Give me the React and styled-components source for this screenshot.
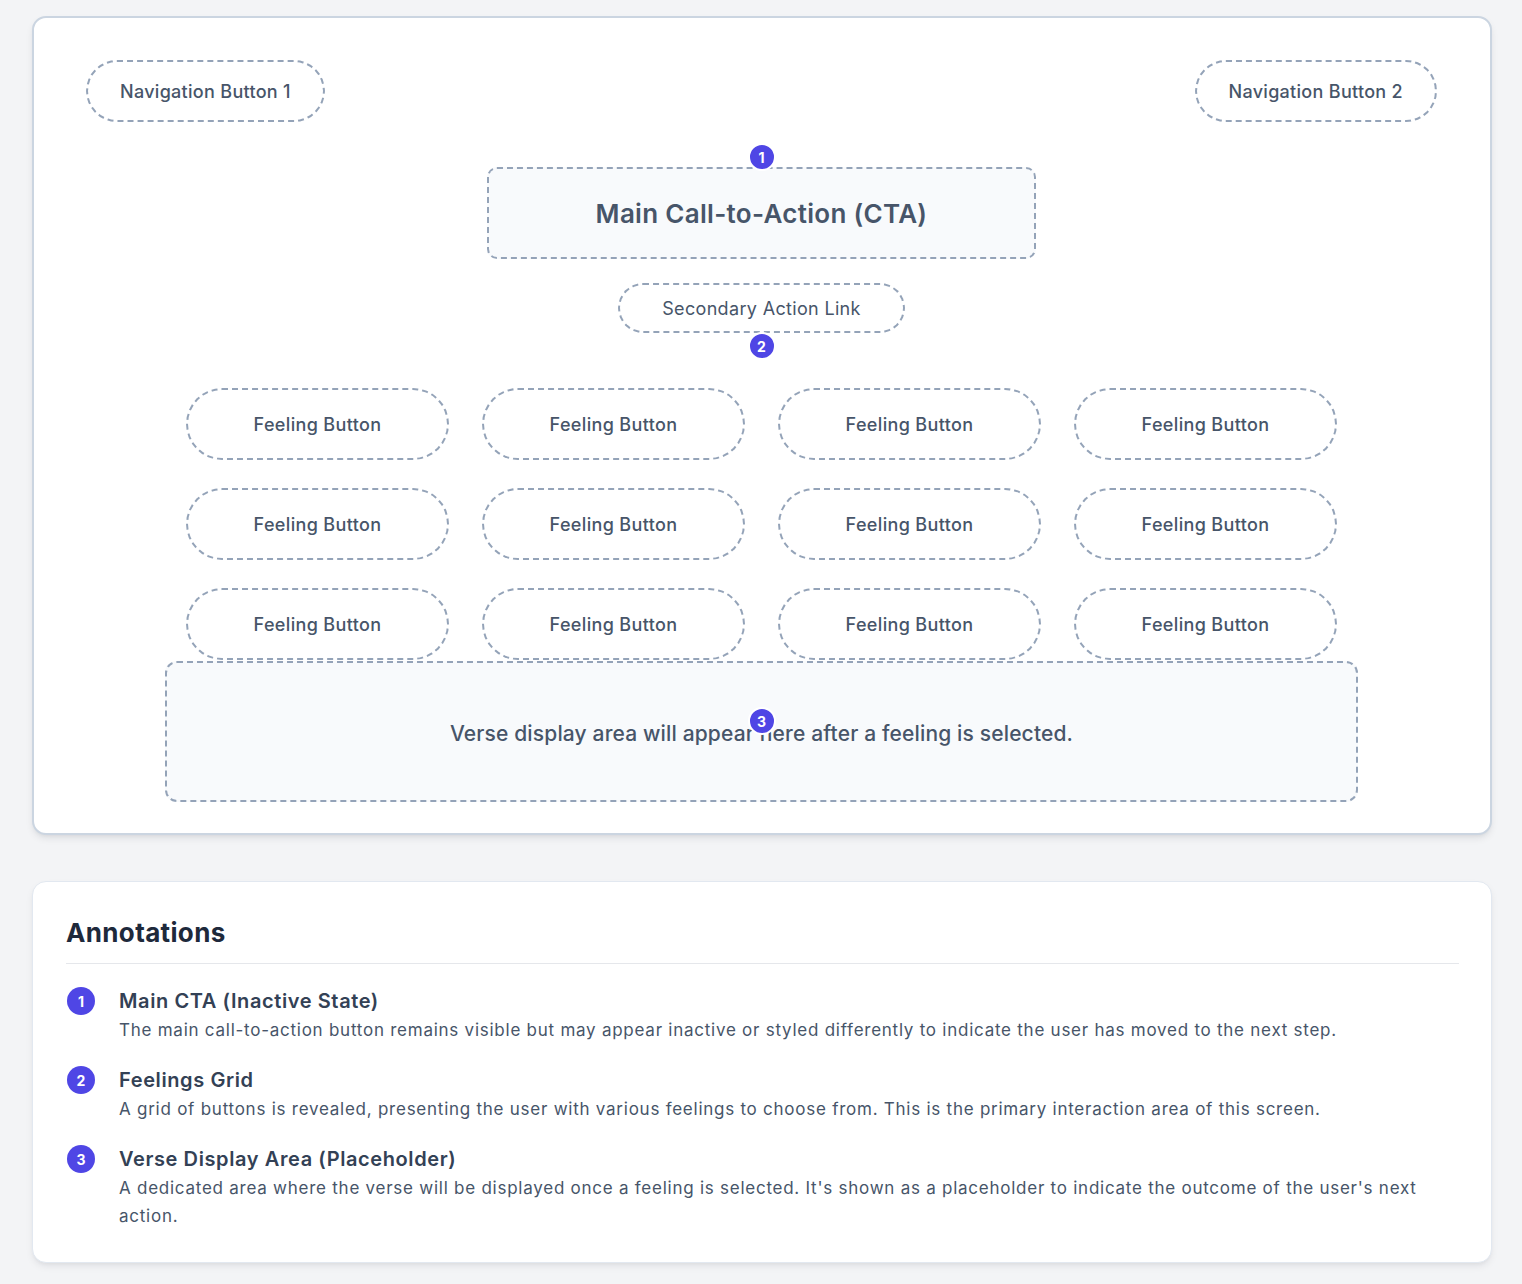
import React from 'react';
import styled, { createGlobalStyle } from 'styled-components';

const GlobalStyle = createGlobalStyle`
  * { box-sizing: border-box; }
  body {
    margin: 0;
    background: #f3f4f6;
    font-family: Inter, "Noto Sans", "Liberation Sans", sans-serif;
    color: #475569;
  }
`;

const Page = styled.div`
  padding: 16px 30px 20px 32px;
  display: flex;
  flex-direction: column;
  gap: 46px;
`;

const MockCard = styled.section`
  background: #ffffff;
  border: 2px solid #cbd5e1;
  border-radius: 14px;
  box-shadow: 0 4px 8px -2px rgba(15, 23, 42, 0.12), 0 2px 4px -2px rgba(15, 23, 42, 0.06);
  padding: 42px 53px 31px 52px;
  display: flex;
  flex-direction: column;
  align-items: center;
`;

const NavRow = styled.div`
  width: 100%;
  display: flex;
  justify-content: space-between;
`;

const Dashed = styled.div`
  position: relative;
  border: 2px dashed #94a3b8;
  display: flex;
  align-items: center;
  justify-content: center;
  color: #475569;
`;

const NavButton = styled(Dashed)`
  height: 62px;
  padding: 0 32px;
  border-radius: 9999px;
  font-size: 18px;
  font-weight: 500;
  letter-spacing: 0.3px;
`;

const Cta = styled(Dashed)`
  margin-top: 45px;
  width: 549px;
  height: 92px;
  border-radius: 10px;
  background: #f8fafc;
  font-size: 26px;
  font-weight: 600;
  letter-spacing: 0.3px;
`;

const Secondary = styled(Dashed)`
  margin-top: 24px;
  width: 287px;
  height: 50px;
  border-radius: 9999px;
  font-size: 18px;
  font-weight: 400;
  letter-spacing: 0.33px;
`;

const Badge = styled.span`
  position: absolute;
  left: 50%;
  top: ${({ $top }) => $top};
  transform: translateX(-50%);
  width: 28px;
  height: 28px;
  border-radius: 50%;
  border: 2px solid #ffffff;
  background: #4f46e5;
  color: #ffffff;
  font-size: 14px;
  font-weight: 700;
  letter-spacing: 0;
  display: flex;
  align-items: center;
  justify-content: center;
  z-index: 2;
`;

const FeelingGrid = styled.div`
  margin-top: 55px;
  display: grid;
  grid-template-columns: repeat(4, 263px);
  column-gap: 33px;
  row-gap: 28px;
`;

const FeelingButton = styled(Dashed)`
  height: 72px;
  border-radius: 9999px;
  font-size: 18px;
  font-weight: 500;
  letter-spacing: 0.35px;
`;

const Verse = styled(Dashed)`
  margin-top: 1px;
  width: 1193px;
  height: 141px;
  padding-top: 3px;
  border-radius: 12px;
  background: #f8fafc;
  font-size: 21px;
  font-weight: 500;
  letter-spacing: 0.15px;
`;

const NotesCard = styled.section`
  background: #ffffff;
  border: 1px solid #e2e8f0;
  border-radius: 14px;
  box-shadow: 0 4px 8px -2px rgba(15, 23, 42, 0.1), 0 2px 4px -2px rgba(15, 23, 42, 0.05);
  padding: 33px 32px 32px 33px;
`;

const NotesTitle = styled.h2`
  margin: 0;
  padding-bottom: 12px;
  border-bottom: 1px solid #e5e7eb;
  font-size: 26px;
  line-height: 36px;
  font-weight: 700;
  letter-spacing: 0.35px;
  color: #1e293b;
`;

const NoteList = styled.ol`
  list-style: none;
  margin: 23px 0 0;
  padding: 0;
  display: flex;
  flex-direction: column;
  gap: 22px;
`;

const NoteItem = styled.li`
  display: grid;
  grid-template-columns: 28px 1fr;
  column-gap: 24px;
  padding-left: 1px;
`;

const NoteBadge = styled.span`
  width: 28px;
  height: 28px;
  border-radius: 50%;
  background: #4f46e5;
  color: #ffffff;
  font-size: 14px;
  font-weight: 700;
  display: flex;
  align-items: center;
  justify-content: center;
`;

const NoteTitle = styled.div`
  font-size: 20px;
  line-height: 28px;
  font-weight: 600;
  letter-spacing: 0.6px;
  color: #334155;
`;

const NoteText = styled.p`
  margin: 1px 0 0;
  font-size: 17px;
  line-height: 28px;
  letter-spacing: 0.75px;
  color: #475569;
`;

const notes = [
  {
    title: 'Main CTA (Inactive State)',
    text: 'The main call-to-action button remains visible but may appear inactive or styled differently to indicate the user has moved to the next step.',
  },
  {
    title: 'Feelings Grid',
    text: 'A grid of buttons is revealed, presenting the user with various feelings to choose from. This is the primary interaction area of this screen.',
  },
  {
    title: 'Verse Display Area (Placeholder)',
    text: "A dedicated area where the verse will be displayed once a feeling is selected. It's shown as a placeholder to indicate the outcome of the user's next action.",
  },
];

const App = () => {
  return (
    <>
      <GlobalStyle />
      <Page>
        <MockCard>
          <NavRow>
            <NavButton>Navigation Button 1</NavButton>
            <NavButton>Navigation Button 2</NavButton>
          </NavRow>

          <Cta>
            <Badge $top="-26px">1</Badge>
            Main Call-to-Action (CTA)
          </Cta>

          <Secondary>
            Secondary Action Link
            <Badge $top="calc(100% + 1px)">2</Badge>
          </Secondary>

          <FeelingGrid>
            {Array.from({ length: 12 }).map((_, i) => (
              <FeelingButton key={i}>Feeling Button</FeelingButton>
            ))}
          </FeelingGrid>

          <Verse>
            <Badge $top="44px">3</Badge>
            Verse display area will appear here after a feeling is selected.
          </Verse>
        </MockCard>

        <NotesCard>
          <NotesTitle>Annotations</NotesTitle>
          <NoteList>
            {notes.map((note, i) => (
              <NoteItem key={note.title}>
                <NoteBadge>{i + 1}</NoteBadge>
                <div>
                  <NoteTitle>{note.title}</NoteTitle>
                  <NoteText>{note.text}</NoteText>
                </div>
              </NoteItem>
            ))}
          </NoteList>
        </NotesCard>
      </Page>
    </>
  );
};

export default App;
